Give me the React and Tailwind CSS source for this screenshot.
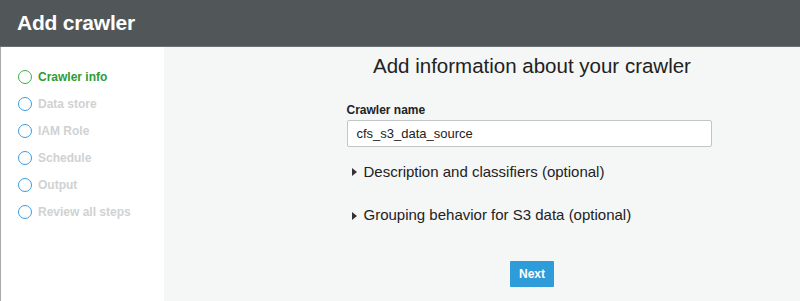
import React from "react";

const steps = [
  { name: "Crawler info", active: true },
  { name: "Data store" },
  { name: "IAM Role" },
  { name: "Schedule" },
  { name: "Output" },
  { name: "Review all steps" },
];

function Section({ title }) {
  return (
    <div className="flex items-center gap-[7px] text-[15px] text-[#222]">
      <span className="w-0 h-0 border-y-[4px] border-y-transparent border-l-[5px] border-l-[#333]" />
      <span>{title}</span>
    </div>
  );
}

export default function App() {
  return (
    <div
      className="w-[800px] h-[301px] flex flex-col overflow-hidden"
      style={{ fontFamily: '"Liberation Sans", Arial, sans-serif' }}
    >
      {/* Header */}
      <header className="h-[47px] shrink-0 bg-[#515759] border-b border-[#6b7072] flex items-center pl-[17px]">
        <h1 className="text-white font-bold text-[21px] tracking-[-0.2px]">Add crawler</h1>
      </header>

      <div className="flex flex-1">
        {/* Steps */}
        <aside className="w-[164px] shrink-0 bg-white border-l border-[#aaa] pt-[21px] pl-[17px]">
          <ul className="flex flex-col gap-[9px]">
            {steps.map((s) => (
              <li key={s.name} className="flex items-center gap-[6px] h-[18px]">
                <span
                  className={`w-[14px] h-[14px] rounded-full border-[1.5px] ${
                    s.active ? "border-[#3cb043]" : "border-[#3d9be0]"
                  }`}
                />
                <span
                  className={`text-[12px] font-bold ${
                    s.active ? "text-[#2e9c35]" : "text-[#cfd2d3]"
                  }`}
                >
                  {s.name}
                </span>
              </li>
            ))}
          </ul>
        </aside>

        {/* Main */}
        <main className="flex-1 bg-[#f5f6f6] flex flex-col items-center pt-[4px]">
          <h2 className="text-[20.5px] text-[#222] ml-[100px]">Add information about your crawler</h2>
          <div className="w-[365px] ml-[94px] mt-[19px]">
            <label className="block text-[12px] font-bold text-[#222]">Crawler name</label>
            <div className="mt-[1px] h-[27px] bg-white border border-[#c2c5c6] rounded-[2px] flex items-center pl-[9px] text-[13px] text-[#222]">
              cfs_s3_data_source
            </div>
            <div className="mt-[14px] pl-[5px] flex flex-col gap-[21px]">
              <Section title="Description and classifiers (optional)" />
              <Section title="Grouping behavior for S3 data (optional)" />
            </div>
          </div>
          <button className="mt-[34px] ml-[100px] w-[44px] h-[26px] bg-[#2e9cd8] text-white text-[12px] font-bold rounded-[1px]">
            Next
          </button>
        </main>
      </div>
    </div>
  );
}
